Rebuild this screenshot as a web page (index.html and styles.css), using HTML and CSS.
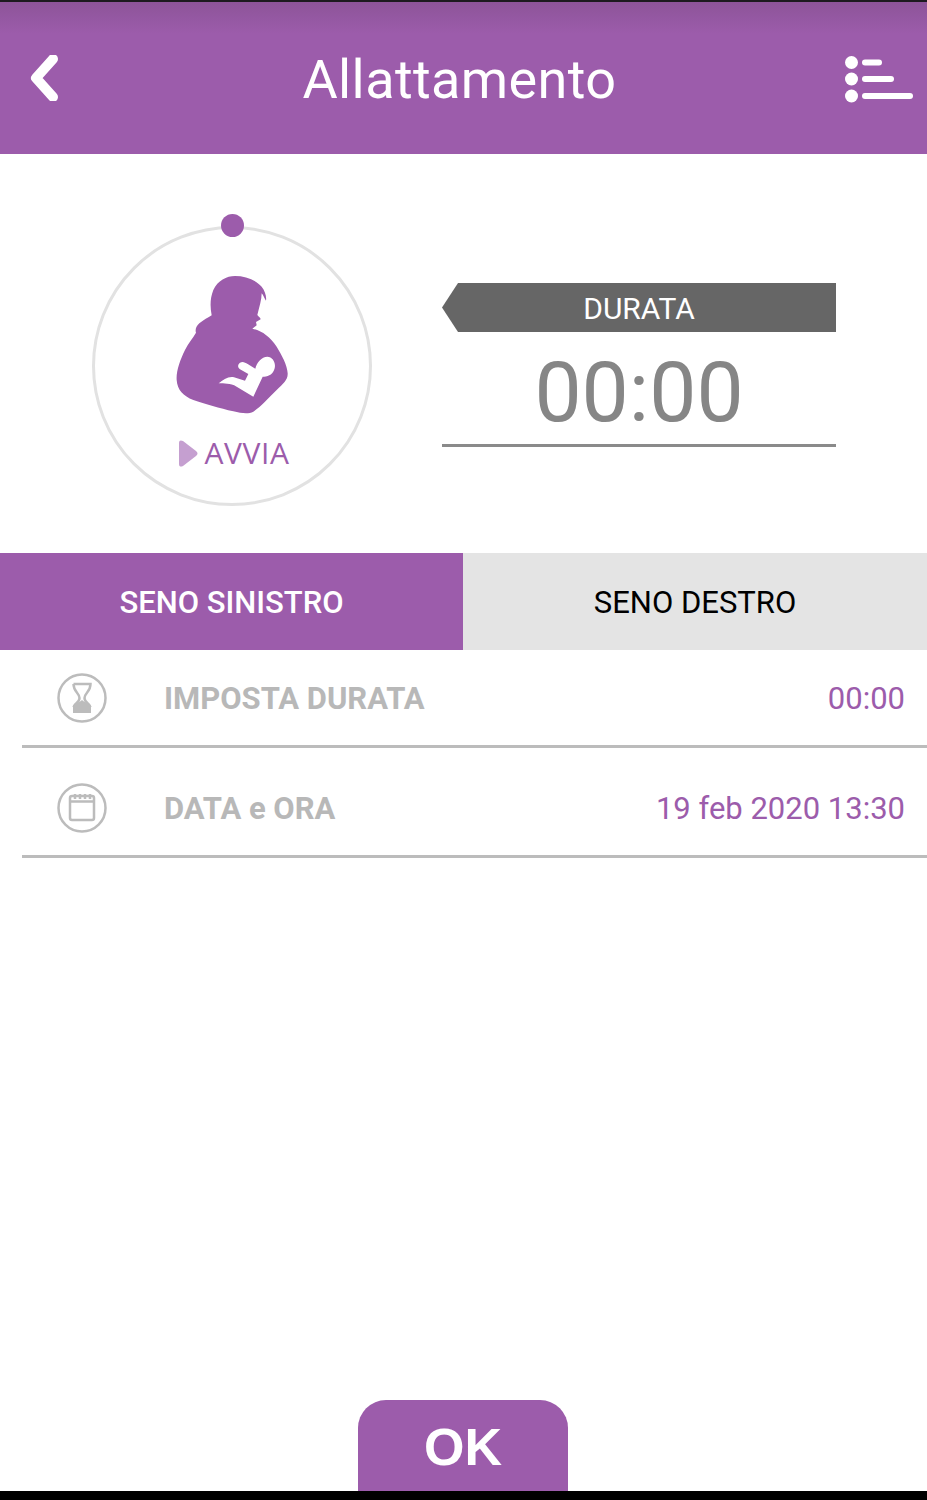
FILE: index.html
```html
<!DOCTYPE html>
<html lang="it">
<head>
<meta charset="utf-8">
<title>Allattamento</title>
<link rel="stylesheet" href="styles.css">
</head>
<body>
<div class="app">
  <header class="topbar">
    <svg class="icon-back" viewBox="0 0 30 46" aria-hidden="true"><path d="M24 4 7 23l17 19" /></svg>
    <h1 class="title">Allattamento</h1>
    <svg class="icon-list" viewBox="0 0 68 48" aria-hidden="true">
      <ellipse cx="6.500" cy="6.500" rx="6.500" ry="6.500"/>
      <ellipse cx="6.500" cy="23" rx="6.500" ry="6.500"/>
      <ellipse cx="6.500" cy="40" rx="6.500" ry="6.500"/>
      <rect x="17" y="3.500" width="20" height="6" rx="3"/>
      <rect x="17" y="20" width="32" height="6" rx="3"/>
      <rect x="17" y="37" width="51" height="6" rx="3"/>
    </svg>
  </header>

  <section class="hero">
    <div class="dial">
      <span class="dial-dot"></span>
      <svg class="mother" viewBox="285 225 345 420" aria-hidden="true">
        <path class="mother-body" d="M465 228C495 228 525 238 545 260C555 272 560 290 558 302C553 295 550 285 545 280C545 300 538 320 532 345C536 350 542 354 542 358L528 366L530 376L517 386C545 392 570 410 590 440C605 465 622 495 623 520C624 540 610 550 590 570C565 595 540 622 520 635C505 643 485 640 460 634C420 625 375 612 340 600C310 588 292 570 290 540C288 515 300 480 315 450C325 430 338 415 348 398C345 390 348 378 358 370C370 360 385 352 395 346C390 320 390 295 400 270C413 242 440 228 465 228Z"/>
        <path class="mother-baby" d="M480 488C488 483 495 487 503 492L526 506C530 488 545 470 562 470C578 470 588 488 584 505C580 522 565 532 548 530L520 590L470 560C450 548 432 552 416 550C430 540 445 528 462 532L495 542L505 522L480 508C472 502 473 493 480 488Z"/>
      </svg>
      <div class="dial-action">
        <svg class="icon-play" viewBox="0 0 20 27" aria-hidden="true"><path d="M1 3C1 0 3 0 5 1L18 11C20 13 20 14 18 16L5 26C3 27 1 27 1 24Z"/></svg>
        <span class="dial-label">AVVIA</span>
      </div>
    </div>
    <div class="timer">
      <div class="timer-tag">DURATA</div>
      <div class="timer-value">00:00</div>
    </div>
  </section>

  <nav class="tabs">
    <div class="tab tab-active">SENO SINISTRO</div>
    <div class="tab">SENO DESTRO</div>
  </nav>

  <div class="rows">
    <div class="row">
      <span class="row-icon">
        <svg viewBox="0 0 50 50" aria-hidden="true">
          <circle class="line" cx="25" cy="25" r="23.500"/>
          <path class="line" d="M16.500 11h17c0 8-6 9-6 14s5 5 6 9M16.500 11c0 8 6 9 6 14s-5 5-6 9"/>
          <path class="solid" d="M16 33c2-3 6-3 9-6 3 3 7 3 9 6v7H16z"/>
        </svg>
      </span>
      <span class="row-label">IMPOSTA DURATA</span>
      <span class="row-value">00:00</span>
    </div>
    <div class="row">
      <span class="row-icon">
        <svg viewBox="0 0 50 50" aria-hidden="true">
          <circle class="line" cx="25" cy="25" r="23.500"/>
          <rect class="line" x="13" y="13" width="24" height="24" rx="2"/>
          <path class="line" d="M13 18.500h24M18 11v5M23 11v5M28 11v5M33 11v5"/>
        </svg>
      </span>
      <span class="row-label">DATA e ORA</span>
      <span class="row-value">19 feb 2020 13:30</span>
    </div>
  </div>

  <footer class="actions">
    <button class="ok" type="button">OK</button>
  </footer>
  <div class="system-bar"></div>
</div>
</body>
</html>
```

FILE: styles.css
```css
* { box-sizing: border-box; }
html, body { margin: 0; padding: 0; background: #fff; }

.app {
  width: 927px;
  height: 1500px;
  display: flex;
  flex-direction: column;
  overflow: hidden;
  font-family: Roboto, "Liberation Sans", sans-serif;
}

.topbar {
  height: 154px;
  flex: none;
  display: flex;
  align-items: center;
  justify-content: space-between;
  padding: 3px 14px 0 29px;
  border-top: 2px solid #1d1a1f;
  background: linear-gradient(#8d5499 0, #9c5cab 32px);
}
.icon-back { width: 30px; height: 46px; margin-top: -4px; fill: none; stroke: #fff; stroke-width: 10; stroke-linecap: round; stroke-linejoin: round; }
.icon-list { width: 68px; height: 48px; fill: #fff; }
.title {
  margin: 0 0 0 15px;
  font-size: 54px;
  font-weight: 400;
  line-height: 1;
  letter-spacing: .4px;
  color: #fff;
}

.hero {
  height: 399px;
  flex: none;
  display: flex;
  align-items: flex-start;
  padding: 72px 91px 0 92px;
  justify-content: space-between;
}
.dial {
  position: relative;
  width: 280px;
  height: 280px;
  border: 3px solid #e2e2e2;
  border-radius: 50%;
  display: flex;
  flex-direction: column;
  align-items: center;
  padding-top: 46px;
}
.dial-dot {
  position: absolute;
  top: -15px;
  left: 126px;
  width: 23px;
  height: 23px;
  border-radius: 50%;
  background: #9c5cab;
}
.mother { width: 115px; height: 140px; flex: none; }
.mother-body { fill: #9c5cab; }
.mother-baby { fill: #fff; }
.dial-action {
  display: flex;
  align-items: center;
  gap: 6px;
  margin: 21px 0 0 4px;
}
.icon-play { width: 20px; height: 27px; fill: #c59fd0; }
.dial-label {
  font-family: "Open Sans", sans-serif;
  font-size: 30px;
  line-height: 34px;
  letter-spacing: .6px;
  color: #9c5cab;
}

.timer {
  width: 394px;
  margin-top: 57px;
  border-bottom: 3px solid #8a8a8a;
}
.timer-tag {
  height: 49px;
  padding-top: 2px;
  display: flex;
  align-items: center;
  justify-content: center;
  font-size: 30px;
  font-weight: 400;
  color: #fff;
  background: #666;
  clip-path: polygon(16px 0, 100% 0, 100% 100%, 16px 100%, 0 50%);
}
.timer-value {
  height: 112px;
  padding-top: 9px;
  display: flex;
  align-items: center;
  justify-content: center;
  font-size: 84px;
  font-weight: 400;
  color: #868686;
}

.tabs {
  height: 97px;
  flex: none;
  display: flex;
}
.tab {
  flex: 1;
  padding-top: 2px;
  display: flex;
  align-items: center;
  justify-content: center;
  font-size: 31px;
  background: #e4e4e4;
  color: #000;
}
.tab-active {
  flex: none;
  width: 463px;
  background: #9c5cab;
  color: #fff;
  font-weight: 500;
}

.rows { padding-left: 22px; flex: none; }
.row {
  height: 98px;
  display: flex;
  align-items: center;
  padding: 2px 22px 0 0;
  border-bottom: 3px solid #bcbcbc;
}
.row + .row { height: 110px; padding-top: 13px; }
.row-icon { width: 50px; height: 50px; margin: 0 0 2px 35px; flex: none; }
.row + .row .row-icon { margin-bottom: 0; }
.row-icon svg { display: block; width: 50px; height: 50px; }
.line { fill: none; stroke: #bcbcbc; stroke-width: 2.500; }
.solid { fill: #bcbcbc; }
.row-label {
  flex: 1;
  margin-left: 57px;
  font-size: 31px;
  font-weight: 700;
  color: #b8b8b8;
}
.row-value {
  font-size: 31px;
  color: #9c5cab;
}

.actions {
  flex: 1;
  display: flex;
  justify-content: center;
  align-items: flex-end;
  padding-right: 1px;
}
.ok {
  width: 210px;
  height: 91px;
  padding: 2px 0 0;
  border: 0;
  border-radius: 28px 28px 0 0;
  background: #9c5cab;
  color: #fff;
  font-family: "Liberation Sans", sans-serif;
  font-size: 52px;
  font-weight: 700;
}
.system-bar { height: 9px; flex: none; background: #000; }
```
